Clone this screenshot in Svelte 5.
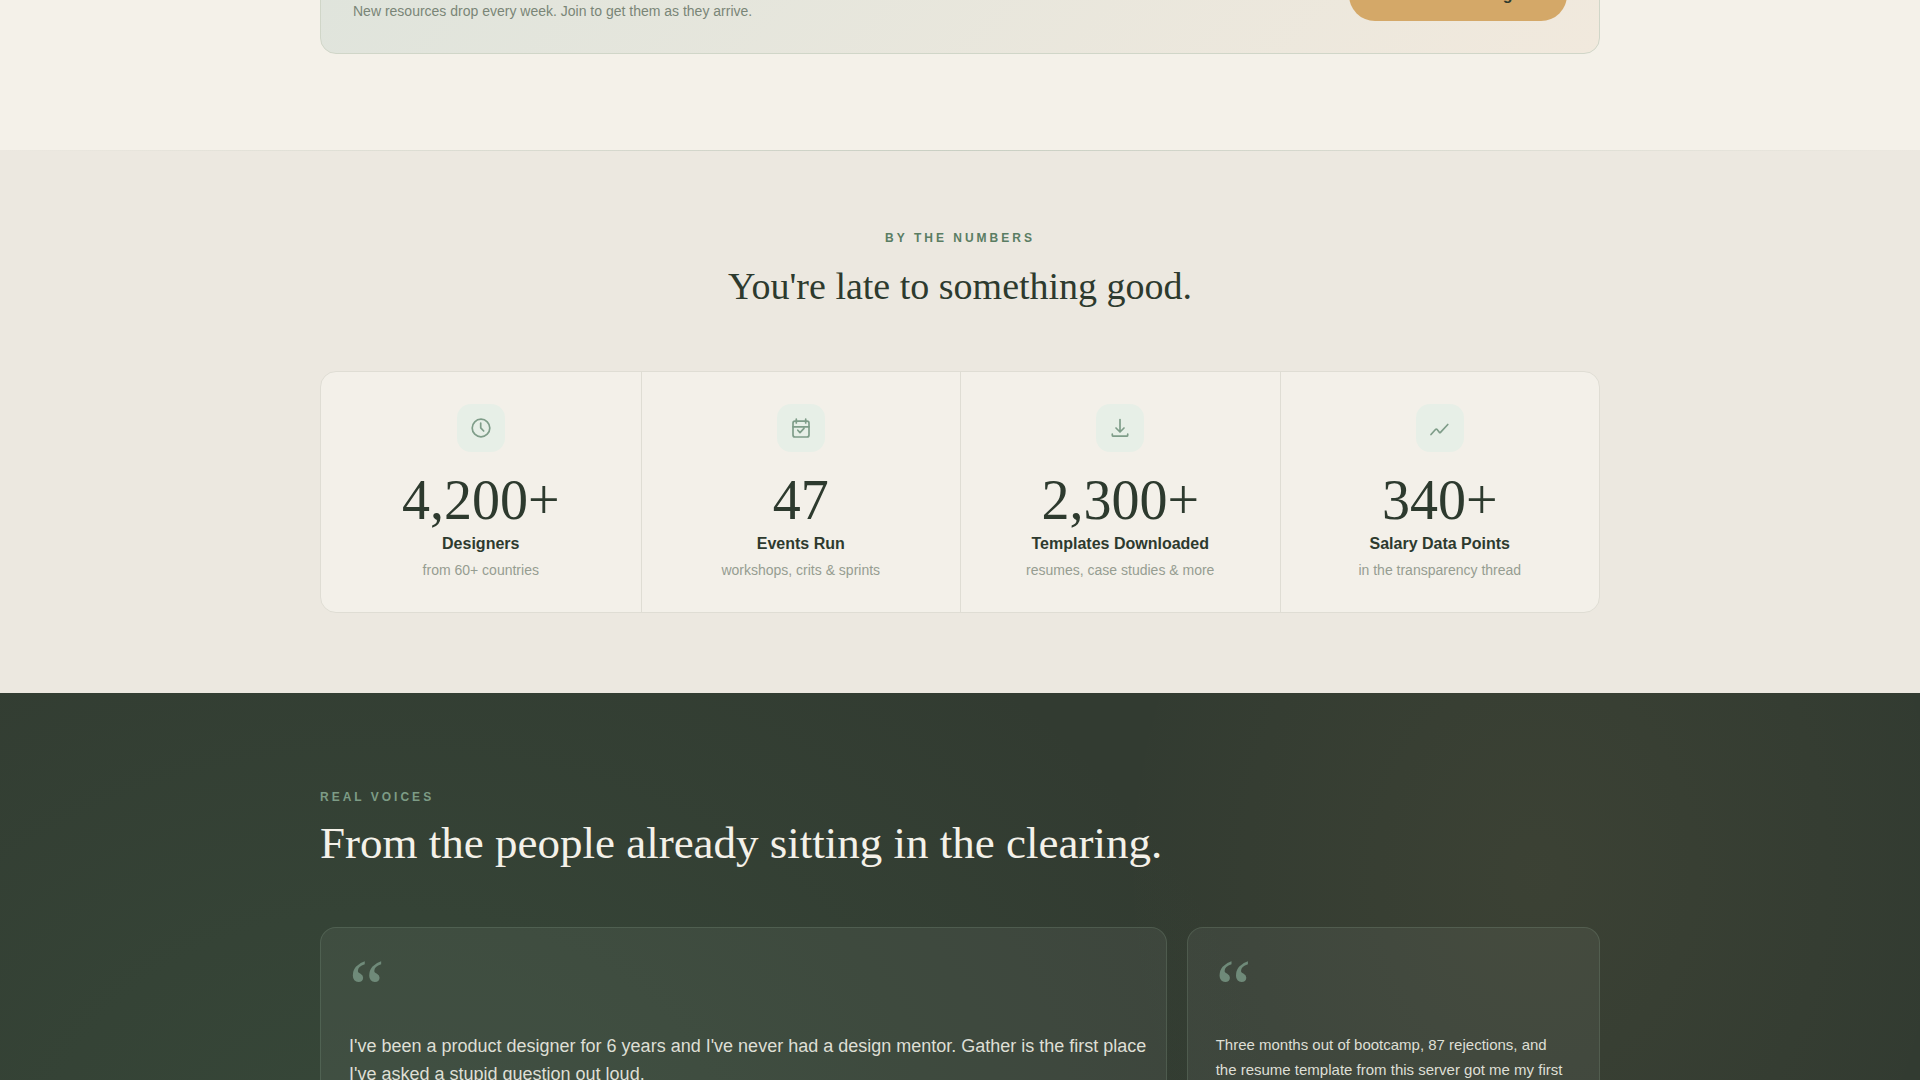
<script>
  const stats = [
    { icon: 'clock', value: '4,200+', label: 'Designers', note: 'from 60+ countries' },
    { icon: 'calendar', value: '47', label: 'Events Run', note: 'workshops, crits & sprints' },
    { icon: 'download', value: '2,300+', label: 'Templates Downloaded', note: 'resumes, case studies & more' },
    { icon: 'trend', value: '340+', label: 'Salary Data Points', note: 'in the transparency thread' },
  ];

  const voices = [
    {
      wide: true,
      text: "I've been a product designer for 6 years and I've never had a design mentor. Gather is the first place I've asked a stupid question out loud.",
    },
    {
      wide: false,
      text: 'Three months out of bootcamp, 87 rejections, and the resume template from this server got me my first',
    },
  ];
</script>

<div class="page">
  <section class="resources">
    <div class="container">
      <div class="banner">
        <p>New resources drop every week. Join to get them as they arrive.</p>
        <button type="button">Join the Clearing →</button>
      </div>
    </div>
  </section>

  <section class="numbers">
    <div class="rule"></div>
    <div class="container">
      <header>
        <p class="eyebrow">BY THE NUMBERS</p>
        <h2>You're late to something good.</h2>
      </header>
      <div class="stats">
        {#each stats as stat}
          <div class="stat">
            <div class="icon">
              <svg viewBox="0 0 24 24" aria-hidden="true">
                {#if stat.icon === 'clock'}
                  <circle cx="12" cy="12" r="8.8" />
                  <path d="M11.7 7v4.8l3 3.2" />
                {:else if stat.icon === 'calendar'}
                  <rect x="4" y="5.2" width="16" height="15.8" rx="2" />
                  <path d="M4 10.8h16M7.3 3v4M16.7 3v4M8.8 14.2l2.2 2.4 4-4.2" />
                {:else if stat.icon === 'download'}
                  <path d="M12 3.5v12M8 12l4 4 4-4M4.3 18v1.2a1 1 0 0 0 1 1h13.4a1 1 0 0 0 1-1V18" />
                {:else}
                  <path d="M3 18.5l4.7-5.2q.6-.6 1.2 0l2.4 3q.6.6 1.2 0l7.3-7.8" />
                {/if}
              </svg>
            </div>
            <div class="value">{stat.value}</div>
            <div class="label">{stat.label}</div>
            <div class="note">{stat.note}</div>
          </div>
        {/each}
      </div>
    </div>
  </section>

  <section class="voices">
    <div class="container">
      <header>
        <p class="eyebrow">REAL VOICES</p>
        <h2>From the people already sitting in the clearing.</h2>
      </header>
      <div class="quotes">
        {#each voices as voice}
          <blockquote class:wide={voice.wide}>
            <span class="mark" aria-hidden="true">“</span>
            <p>{voice.text}</p>
          </blockquote>
        {/each}
      </div>
    </div>
  </section>
</div>

<style>
  :global(body) {
    margin: 0;
    background: #f4f1e9;
  }
  .page {
    --serif: 'Liberation Serif', 'Times New Roman', serif;
    display: flex;
    flex-direction: column;
    height: 100vh;
    overflow: hidden;
    font-family: 'Liberation Sans', Arial, sans-serif;
    color: #2d3a2e;
  }
  section {
    flex-shrink: 0;
  }
  .container {
    max-width: 1280px;
    margin: 0 auto;
  }
  p,
  h2,
  blockquote {
    margin: 0;
  }
  h2 {
    font-family: var(--serif);
    font-weight: 400;
  }
  .eyebrow {
    font-size: 12px;
    line-height: 18px;
    font-weight: 700;
    letter-spacing: 3px;
    color: #5a7d63;
  }

  /* resources */
  .resources {
    margin-top: -64px;
    padding-bottom: 96px;
  }
  .banner {
    display: flex;
    align-items: flex-end;
    justify-content: space-between;
    padding: 32px;
    border: 1px solid #d0d6c8;
    border-radius: 16px;
    background: linear-gradient(135deg, #dfe4dc, #f1e9dd);
  }
  .banner p {
    font-size: 14px;
    line-height: 20px;
    color: #7a8577;
  }
  .banner button {
    padding: 0 34px;
    border: 0;
    border-radius: 26px;
    background: #d4a868;
    color: #2d3a2e;
    font-family: inherit;
    font-size: 16px;
    font-weight: 700;
    line-height: 52px;
    cursor: pointer;
  }

  /* numbers */
  .numbers {
    background: #ece8e0;
    padding-bottom: 80px;
  }
  .rule {
    height: 1px;
    margin-bottom: 78px;
    background: linear-gradient(90deg, transparent, #c9cfc3, transparent);
  }
  .numbers header {
    text-align: center;
    margin-bottom: 62px;
  }
  .numbers h2 {
    margin-top: 16px;
    font-size: 38px;
    line-height: 46px;
  }
  .stats {
    display: grid;
    grid-template-columns: repeat(4, 1fr);
    border: 1px solid #dfddd4;
    border-radius: 16px;
    background: #f3f0e9;
    overflow: hidden;
  }
  .stat {
    display: flex;
    flex-direction: column;
    align-items: center;
    padding: 32px 24px;
    text-align: center;
  }
  .stat + .stat {
    border-left: 1px solid #dfddd4;
  }
  .icon {
    display: flex;
    align-items: center;
    justify-content: center;
    width: 48px;
    height: 48px;
    margin-bottom: 20px;
    border-radius: 14px;
    background: #e7efe7;
  }
  .icon svg {
    width: 24px;
    height: 24px;
    fill: none;
    stroke: #7f9d89;
    stroke-width: 1.7;
    stroke-linecap: round;
    stroke-linejoin: round;
  }
  .value {
    font-family: var(--serif);
    font-size: 56px;
    line-height: 56px;
  }
  .label {
    margin: 4px 0;
    font-size: 16px;
    font-weight: 700;
    line-height: 24px;
  }
  .note {
    font-size: 14px;
    line-height: 20px;
    color: #969d91;
  }

  /* voices */
  .voices {
    padding: 95px 0;
    background:
      radial-gradient(ellipse 420px 520px at 80% 180px, rgba(212, 168, 104, 0.06), transparent),
      radial-gradient(ellipse 900px 680px at 20% 480px, rgba(74, 124, 89, 0.2), transparent),
      #323b31;
  }
  .voices .eyebrow {
    color: #7d9c86;
  }
  .voices h2 {
    margin-top: 12px;
    font-size: 45px;
    line-height: 50px;
    color: #f4f1e9;
  }
  .voices header {
    margin-bottom: 59px;
  }
  .quotes {
    display: grid;
    grid-template-columns: repeat(3, 1fr);
    gap: 20px;
  }
  blockquote {
    padding: 28px;
    border: 1px solid rgba(143, 175, 152, 0.2);
    border-radius: 16px;
    background: rgba(244, 241, 233, 0.06);
  }
  .mark {
    display: block;
    margin-bottom: 12px;
    font-family: var(--serif);
    font-size: 80px;
    line-height: 64px;
    color: #6f8a79;
  }
  blockquote p {
    font-size: 15px;
    line-height: 25px;
    color: #dedfd5;
  }
  .wide {
    grid-column: span 2;
    padding-right: 8px;
  }
  .wide p {
    font-size: 18px;
    line-height: 28px;
  }
</style>
